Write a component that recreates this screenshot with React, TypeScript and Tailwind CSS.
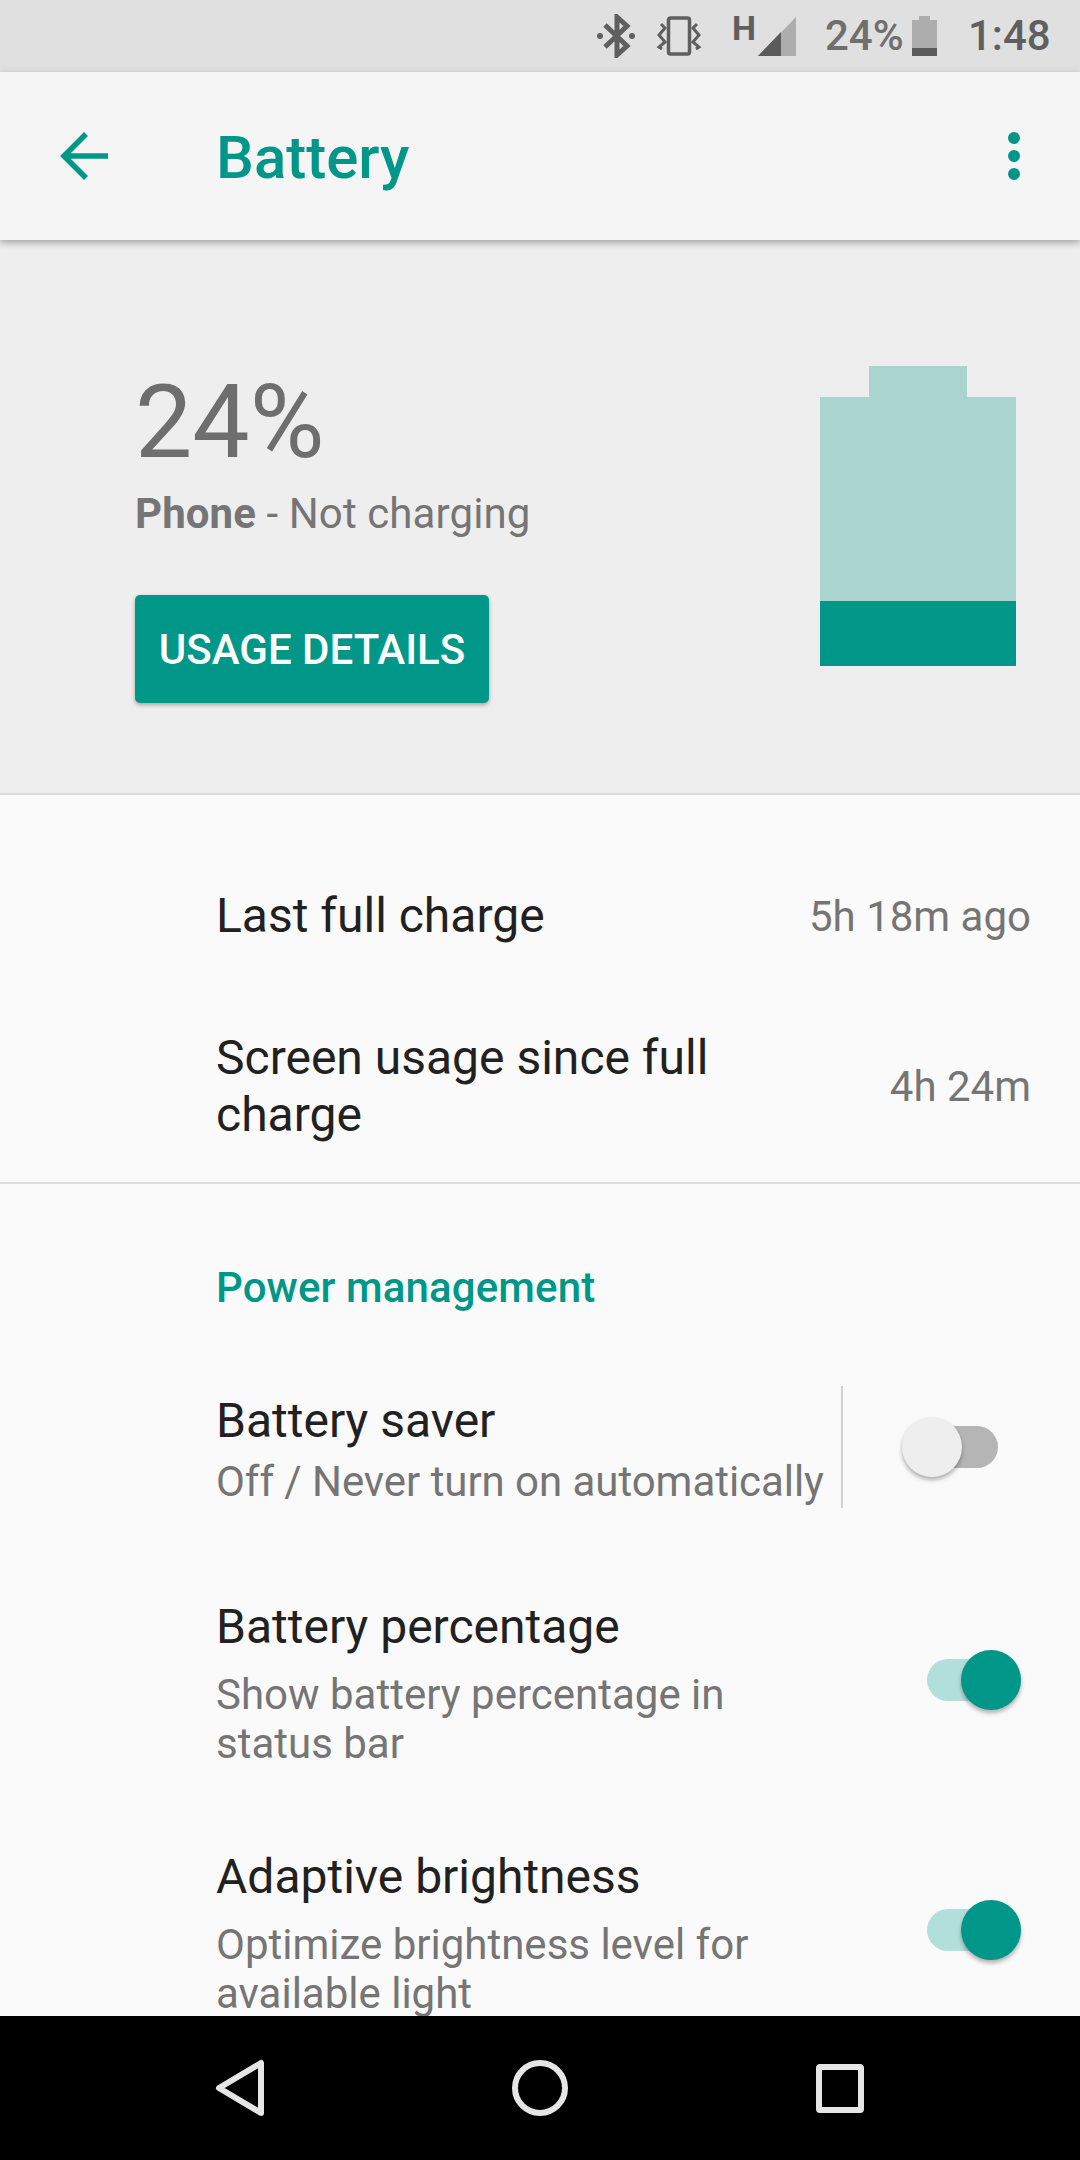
function Switch({ on }: { on: boolean }) {
  return (
    <div className={`relative h-[42px] w-[94px] rounded-full ${on ? "bg-[#b2dfdb]" : "bg-[#b5b5b5]"}`}>
      <div
        className={`absolute top-[-9px] h-[60px] w-[60px] rounded-full shadow-[0_3px_4px_rgba(0,0,0,0.3)] ${
          on ? "right-0 bg-[#009688]" : "left-[-2px] bg-[#eeeeee]"
        }`}
      />
    </div>
  );
}

function StatusBar() {
  return (
    <div className="flex h-[72px] shrink-0 items-center bg-[#e0e0e0] pl-[596px] text-[42px] font-medium leading-[72px] text-[#5f5f5f]">
      <svg width="40" height="44" viewBox="0 0 40 44" fill="none" stroke="#5f5f5f" strokeWidth="5">
        <path d="M9 11l22 21-10 9V3l10 9-22 21" />
        <circle cx="4" cy="22" r="3" fill="#5f5f5f" stroke="none" />
        <circle cx="36" cy="22" r="3" fill="#5f5f5f" stroke="none" />
      </svg>
      <svg className="ml-[20px]" width="46" height="40" viewBox="0 0 46 40" fill="none" stroke="#5f5f5f">
        <rect x="12.5" y="2" width="21" height="36" rx="2" strokeWidth="3.5" />
        <path d="M5 8l4 4-6 7 6 7-6 5 3 2M41 8l-4 4 6 7-6 7 6 5-3 2" strokeWidth="3" />
      </svg>
      <span className="mb-[16px] ml-[30px] w-[26px] text-[34px] font-bold leading-[24px]">H</span>
      <svg width="38" height="39" viewBox="0 0 38 39">
        <path d="M38 0v39H0z" fill="#adadad" />
        <path d="M23 15v24H0z" fill="#5b5b5b" />
      </svg>
      <span className="ml-[29px] w-[87px] text-[#6f6f6f]">24%</span>
      <svg width="25" height="40" viewBox="0 0 25 40">
        <path d="M7 0h11v4h7v36H0V4h7z" fill="#adadad" />
        <path d="M0 32h25v8H0z" fill="#5b5b5b" />
      </svg>
      <span className="ml-[31px]">1:48</span>
    </div>
  );
}

function Toolbar() {
  return (
    <div className="relative z-10 flex h-[168px] shrink-0 items-center bg-[#f5f5f5] shadow-[0_3px_7px_rgba(0,0,0,0.3)]">
      <svg className="ml-[60px]" width="48" height="48" viewBox="0 0 48 48" fill="none" stroke="#009688" strokeWidth="5.5">
        <path d="M48 24H4M26 2L4 24l22 22" />
      </svg>
      <h1 className="ml-[108px] mt-[4px] flex-1 text-[60px] font-medium leading-none text-[#009688]">Battery</h1>
      <svg className="mr-[58px]" width="16" height="48" viewBox="0 0 16 48" fill="#009688">
        <circle cx="8" cy="6" r="6" />
        <circle cx="8" cy="24" r="6" />
        <circle cx="8" cy="42" r="6" />
      </svg>
    </div>
  );
}

function BatterySummary() {
  return (
    <section className="flex h-[555px] shrink-0 items-start justify-between border-b-2 border-[#dcdcdc] bg-[#eeeeee] pl-[135px] pr-[64px]">
      <div>
        <p className="mt-[127px] text-[102px] leading-[110px] text-[#6e6e6e]">24%</p>
        <p className="mt-[12px] text-[42px] leading-[50px] tracking-[0.1px] text-[#757575]">
          <span className="font-bold">Phone</span> - Not charging
        </p>
        <button className="mt-[56px] h-[108px] w-[354px] rounded-[5px] bg-[#009688] text-[42px] font-medium text-white shadow-[0_2px_4px_rgba(0,0,0,0.3)]">
          USAGE DETAILS
        </button>
      </div>
      <svg className="mt-[126px]" width="196" height="300" viewBox="0 0 196 300">
        <path d="M49 0h98v31h49v269H0V31h49z" fill="#a9d4d0" />
        <path d="M0 235h196v65H0z" fill="#009688" />
      </svg>
    </section>
  );
}

function SwitchRow({ title, summary }: { title: string; summary: string[] }) {
  return (
    <div className="flex h-[250px] shrink-0 items-start pl-[216px] pr-[59px] pt-[49px]">
      <div className="flex-1">
        <p className="text-[48px] leading-[57px] text-[#212121]">{title}</p>
        <div className="mt-[15px] text-[42px] leading-[49px] text-[#757575]">
          {summary.map((line) => (
            <p key={line} className="whitespace-nowrap">{line}</p>
          ))}
        </div>
      </div>
      <div className="mt-[61px]">
        <Switch on />
      </div>
    </div>
  );
}

function NavBar() {
  return (
    <div className="flex h-[144px] shrink-0 items-center bg-black pl-[214px]">
      <svg width="52" height="60" viewBox="0 0 52 60" fill="none" stroke="#e6e6e6" strokeWidth="6" strokeLinejoin="round">
        <path d="M47 5v50L5 30z" />
      </svg>
      <svg className="ml-[246px]" width="56" height="56" viewBox="0 0 56 56" fill="none" stroke="#e6e6e6" strokeWidth="6">
        <circle cx="28" cy="28" r="25" />
      </svg>
      <svg className="ml-[248px]" width="48" height="49" viewBox="0 0 48 49" fill="none" stroke="#e6e6e6" strokeWidth="6" strokeLinejoin="round">
        <rect x="3" y="3" width="42" height="43" rx="1" />
      </svg>
    </div>
  );
}

export default function App() {
  return (
    <div className="flex h-[2160px] w-[1080px] flex-col overflow-hidden bg-[#fafafa] font-[Roboto,sans-serif]">
      <StatusBar />
      <Toolbar />
      <main className="flex min-h-0 flex-1 flex-col overflow-hidden">
        <BatterySummary />

        <section className="shrink-0 border-b-2 border-[#dcdcdc] pb-[11px] pt-[36px]">
          <div className="flex h-[168px] items-center justify-between pl-[216px] pr-[49px]">
            <p className="text-[48px] leading-[57px] text-[#212121]">Last full charge</p>
            <p className="mt-[3px] text-[42px] text-[#757575]">5h 18m ago</p>
          </div>
          <div className="flex h-[172px] items-center justify-between pl-[216px] pr-[49px]">
            <p className="mt-[2px] w-[520px] text-[48px] leading-[57px] text-[#212121]">Screen usage since full charge</p>
            <p className="mt-[2px] text-[42px] text-[#757575]">4h 24m</p>
          </div>
        </section>

        <h2 className="h-[160px] shrink-0 pl-[216px] pt-[80px] text-[42px] font-medium leading-[48px] tracking-[0.12px] text-[#009688]">Power management</h2>

        <div className="flex h-[205px] shrink-0 items-center pl-[216px]">
          <div className="mt-[4px] w-[625px]">
            <p className="text-[48px] leading-[57px] text-[#212121]">Battery saver</p>
            <p className="mt-[8px] whitespace-nowrap text-[42px] leading-[49px] tracking-[-0.05px] text-[#757575]">Off / Never turn on automatically</p>
          </div>
          <div className="h-[122px] w-[2px] bg-[#d0d0d0]" />
          <div className="ml-[61px]">
            <Switch on={false} />
          </div>
        </div>

        <SwitchRow title="Battery percentage" summary={["Show battery percentage in", "status bar"]} />
        <SwitchRow title="Adaptive brightness" summary={["Optimize brightness level for", "available light"]} />
      </main>
      <NavBar />
    </div>
  );
}
